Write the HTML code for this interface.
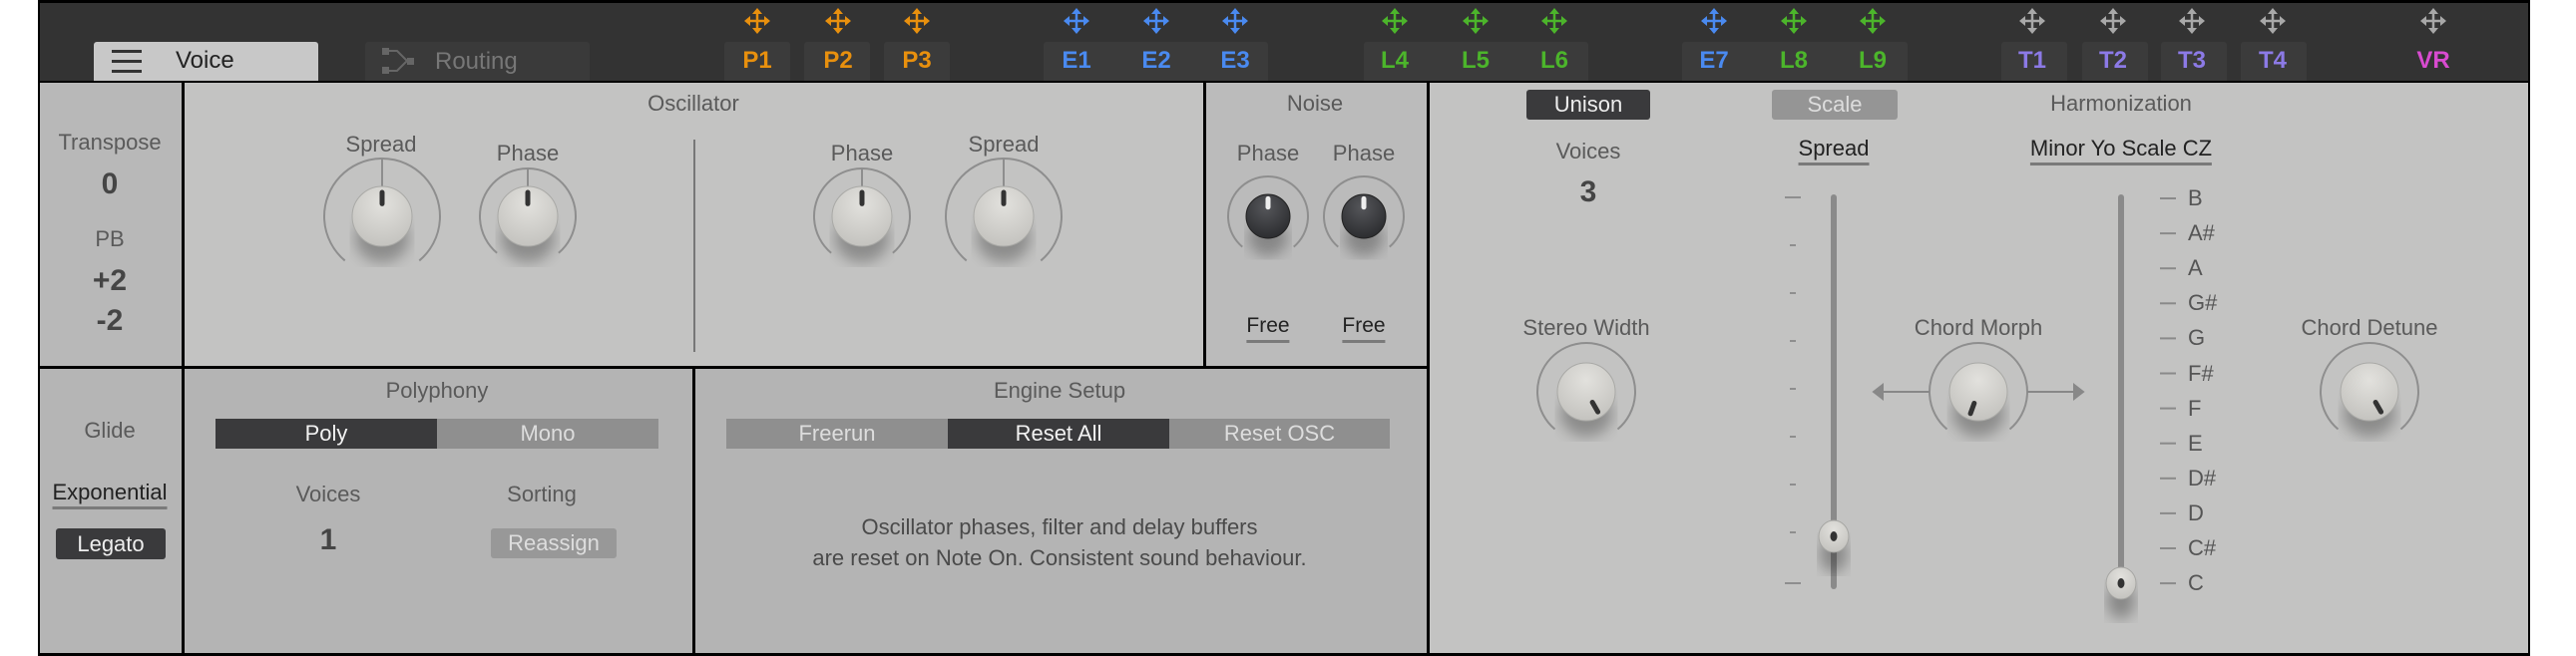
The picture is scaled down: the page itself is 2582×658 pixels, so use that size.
<!DOCTYPE html>
<html><head><meta charset="utf-8">
<style>
*{margin:0;padding:0;box-sizing:border-box}
body{width:2582px;height:658px;background:#fff;position:relative;overflow:hidden;font-family:"Liberation Sans",sans-serif}
.a{position:absolute}
.t{position:absolute;transform:translateX(-50%);white-space:nowrap;color:#5a5a5a;font-size:22px;line-height:26px}
.b{font-weight:bold;color:#454545;font-size:30px;line-height:34px}
.tl{position:absolute;font-size:24px;font-weight:bold;transform:translateX(-50%);top:46px;line-height:30px}
.box{position:absolute;top:42px;height:39px;background:#3b3b3b;border-radius:3px 3px 0 0}
.ul{border-bottom:3px solid #7a7a7a;color:#222;padding-bottom:1px}
.seg{position:absolute;height:30px;font-size:22px;line-height:30px;text-align:center;color:#ddd;background:#8f8f8f}
.dk{background:#3a3a3c;color:#f2f2f2}
</style></head><body>
<!-- panel frame -->
<div class="a" style="left:38px;top:0;width:2498px;height:658px;background:#000"></div>
<div class="a" style="left:40px;top:3px;width:2494px;height:78px;background:#333"></div>
<!-- row1 -->
<div class="a" style="left:40px;top:83px;width:142px;height:284px;background:#b8b8b8"></div>
<div class="a" style="left:185px;top:83px;width:1021px;height:284px;background:#c3c3c2"></div>
<div class="a" style="left:1209px;top:83px;width:221px;height:284px;background:#bbbbbb"></div>
<div class="a" style="left:1433px;top:83px;width:1101px;height:572px;background:#c3c3c2"></div>
<!-- row2 -->
<div class="a" style="left:40px;top:370px;width:142px;height:285px;background:#b5b5b5"></div>
<div class="a" style="left:185px;top:370px;width:509px;height:285px;background:#b4b4b4"></div>
<div class="a" style="left:697px;top:370px;width:733px;height:285px;background:#b4b4b4"></div>
<div class="a" style="left:695px;top:140px;width:2px;height:213px;background:#777"></div>

<!-- top bar -->
<div class="a" style="left:94px;top:42px;width:225px;height:39px;background:#c8c8c8;border-radius:3px 3px 0 0"></div>
<div class="a" style="left:112px;top:50px;width:30px;height:3px;background:#333;box-shadow:0 10px 0 #333,0 20px 0 #333"></div>
<div class="a" style="left:176px;top:46px;font-size:24px;line-height:30px;color:#222">Voice</div>
<div class="a" style="left:366px;top:42px;width:225px;height:39px;background:#3a3a3a;border-radius:3px 3px 0 0"></div>
<svg class="a" style="left:382px;top:47px" width="36" height="30"><rect x="1" y="1" width="7" height="7" fill="#666"/><rect x="1" y="20" width="7" height="7" fill="#666"/><rect x="26" y="11" width="7" height="7" fill="#666"/><path d="M8 4 L16 4 L26 14 M8 24 L16 24 L26 14" stroke="#666" stroke-width="2" fill="none"/></svg>
<div class="a" style="left:436px;top:47px;font-size:24px;line-height:30px;color:#777">Routing</div>
<div class="box" style="left:726px;width:66px"></div><div class="box" style="left:806px;width:66px"></div><div class="box" style="left:886px;width:66px"></div>
<div class="box" style="left:1046px;width:225px"></div>
<div class="box" style="left:1367px;width:225px"></div>
<div class="box" style="left:1686px;width:226px"></div>
<div class="box" style="left:2006px;width:66px"></div><div class="box" style="left:2087px;width:66px"></div><div class="box" style="left:2166px;width:66px"></div><div class="box" style="left:2246px;width:66px"></div>
<div id="tb"></div>

<!-- row1 text -->
<div class="t" style="left:110px;top:130px">Transpose</div>
<div class="t b" style="left:110px;top:168px">0</div>
<div class="t" style="left:110px;top:227px">PB</div>
<div class="t b" style="left:110px;top:265px">+2</div>
<div class="t b" style="left:110px;top:305px">-2</div>
<div class="t" style="left:695px;top:91px">Oscillator</div>
<div class="t" style="left:382px;top:132px">Spread</div>
<div class="t" style="left:529px;top:141px">Phase</div>
<div class="t" style="left:864px;top:141px">Phase</div>
<div class="t" style="left:1006px;top:132px">Spread</div>
<div class="t" style="left:1318px;top:91px">Noise</div>
<div class="t" style="left:1271px;top:141px">Phase</div>
<div class="t" style="left:1367px;top:141px">Phase</div>
<div class="t ul" style="left:1271px;top:314px;font-size:21px">Free</div>
<div class="t ul" style="left:1367px;top:314px;font-size:21px">Free</div>

<!-- right panel -->
<div class="a" style="left:1530px;top:90px;width:124px;height:30px;background:#3a3a3c;border-radius:3px;color:#eee;font-size:22px;line-height:30px;text-align:center">Unison</div>
<div class="a" style="left:1776px;top:90px;width:126px;height:30px;background:#959595;border-radius:3px;color:#ddd;font-size:22px;line-height:30px;text-align:center">Scale</div>
<div class="t" style="left:2126px;top:91px">Harmonization</div>
<div class="t" style="left:1592px;top:139px">Voices</div>
<div class="t b" style="left:1592px;top:176px">3</div>
<div class="t ul" style="left:1838px;top:136px">Spread</div>
<div class="t ul" style="left:2126px;top:136px">Minor Yo Scale CZ</div>
<div class="t" style="left:1590px;top:316px">Stereo Width</div>
<div class="t" style="left:1983px;top:316px">Chord Morph</div>
<div class="t" style="left:2375px;top:316px">Chord Detune</div>
<div id="notes"></div>

<!-- row2 -->
<div class="t" style="left:110px;top:419px">Glide</div>
<div class="t ul" style="left:110px;top:481px">Exponential</div>
<div class="a" style="left:56px;top:530px;width:110px;height:31px;background:#3a3a3c;border-radius:3px;color:#eee;font-size:22px;line-height:31px;text-align:center">Legato</div>
<div class="t" style="left:438px;top:379px">Polyphony</div>
<div class="seg dk" style="left:216px;top:420px;width:222px">Poly</div>
<div class="seg" style="left:438px;top:420px;width:222px">Mono</div>
<div class="t" style="left:329px;top:483px">Voices</div>
<div class="t b" style="left:329px;top:525px">1</div>
<div class="t" style="left:543px;top:483px">Sorting</div>
<div class="a" style="left:492px;top:530px;width:126px;height:30px;background:#989898;border-radius:3px;color:#ddd;font-size:22px;line-height:30px;text-align:center">Reassign</div>
<div class="t" style="left:1062px;top:379px">Engine Setup</div>
<div class="seg" style="left:728px;top:420px;width:222px">Freerun</div>
<div class="seg dk" style="left:950px;top:420px;width:222px">Reset All</div>
<div class="seg" style="left:1172px;top:420px;width:221px">Reset OSC</div>
<div class="t" style="left:1062px;top:516px;color:#4a4a4a">Oscillator phases, filter and delay buffers</div>
<div class="t" style="left:1062px;top:547px;color:#4a4a4a">are reset on Note On. Consistent sound behaviour.</div>

<svg id="g" class="a" style="left:0;top:0" width="2582" height="658"></svg>

<script>
var tb='',cols={o:'#e8900e',b:'#4a8af0',g:'#4cb52b',p:'#8c7ae6',v:'#d84bd0',gr:'#a8a8a8'};
var items=[['P1',759,'o','o'],['P2',840,'o','o'],['P3',919,'o','o'],['E1',1079,'b','b'],['E2',1159,'b','b'],['E3',1238,'b','b'],['L4',1398,'g','g'],['L5',1479,'g','g'],['L6',1558,'g','g'],['E7',1718,'b','b'],['L8',1798,'g','g'],['L9',1877,'g','g'],['T1',2037,'p','gr'],['T2',2118,'p','gr'],['T3',2197,'p','gr'],['T4',2278,'p','gr'],['VR',2439,'v','gr']];
var svg='';
items.forEach(function(it){
 tb+='<div class="tl" style="left:'+it[1]+'px;color:'+cols[it[2]]+'">'+it[0]+'</div>';
 var x=it[1],y=21,c=cols[it[3]];
 svg+='<g stroke="'+c+'" stroke-width="2.5" fill="'+c+'"><line x1="'+x+'" y1="'+(y-10)+'" x2="'+x+'" y2="'+(y+10)+'"/><line x1="'+(x-10)+'" y1="'+y+'" x2="'+(x+10)+'" y2="'+y+'"/></g>'+
 '<g fill="'+c+'"><path d="M'+x+' '+(y-13)+'l-5 6h10z M'+x+' '+(y+13)+'l-5 -6h10z M'+(x-13)+' '+y+'l6 -5v10z M'+(x+13)+' '+y+'l-6 -5v10z"/></g>';
});
document.getElementById('tb').innerHTML=tb;
var n=['B','A#','A','G#','G','F#','F','E','D#','D','C#','C'],nh='';
n.forEach(function(s,i){nh+='<div class="a" style="left:2193px;top:'+(186+i*35.1)+'px;font-size:22px;line-height:26px;color:#555">'+s+'</div>';
 svg+='<line x1="2165" y1="'+(199+i*35.1)+'" x2="2181" y2="'+(199+i*35.1)+'" stroke="#8a8a8a" stroke-width="2"/>';});
document.getElementById('notes').innerHTML=nh;
svg+='<defs><radialGradient id="kg" cx="50%" cy="30%" r="70%"><stop offset="0" stop-color="#e2e1dd"/><stop offset="1" stop-color="#c4c3bf"/></radialGradient><radialGradient id="dg" cx="45%" cy="30%" r="70%"><stop offset="0" stop-color="#55565a"/><stop offset="1" stop-color="#2c2d30"/></radialGradient><filter id="bl"><feGaussianBlur stdDeviation="7"/></filter></defs>';
function pt(cx,cy,r,a){a=a*Math.PI/180;return [cx+r*Math.sin(a),cy-r*Math.cos(a)];}
function knob(cx,cy,R,r,ang,dark,line){
 var s=pt(cx,cy,R,-140),e=pt(cx,cy,R,140);
 svg+='<ellipse cx="'+cx+'" cy="'+(cy+22)+'" rx="'+(r*0.9)+'" ry="'+(r*0.8)+'" fill="#000" opacity="0.28" filter="url(#bl)"/>';
 svg+='<path d="M'+s[0]+' '+s[1]+' A'+R+' '+R+' 0 1 1 '+e[0]+' '+e[1]+'" stroke="#8e8e8e" stroke-width="2" fill="none"/>';
 if(line)svg+='<line x1="'+cx+'" y1="'+(cy-R)+'" x2="'+cx+'" y2="'+(cy-r)+'" stroke="#8e8e8e" stroke-width="2"/>';
 svg+='<circle cx="'+cx+'" cy="'+cy+'" r="'+r+'" fill="url(#'+(dark?'dg':'kg')+')" stroke="'+(dark?'#222':'#a9a9a6')+'" stroke-width="1"/>';
 var p1=pt(cx,cy,r*0.42,ang),p2=pt(cx,cy,r*0.8,ang);
 svg+='<line x1="'+p1[0]+'" y1="'+p1[1]+'" x2="'+p2[0]+'" y2="'+p2[1]+'" stroke="'+(dark?'#eee':'#333')+'" stroke-width="5" stroke-linecap="round"/>';
}
knob(383,217,58,30,0,0,1);knob(529,217,48,30,0,0,1);knob(864,217,48,30,0,0,1);knob(1006,217,58,30,0,0,1);
knob(1271,217,40,22,0,1,0);knob(1367,217,40,22,0,1,0);
knob(1590,393,49,29,150,0,0);knob(1983,393,49,29,-160,0,0);knob(2375,393,49,29,150,0,0);
// arrows chord morph
svg+='<g stroke="#888" stroke-width="2" fill="#888"><line x1="1884" y1="393" x2="1934" y2="393"/><line x1="2032" y1="393" x2="2082" y2="393"/><path d="M1878 393l9 -7v14z M2088 393l-9 -7v14z"/></g>';
// sliders
[[1838,198,588,538],[2126,198,585,585]].forEach(function(s){
 svg+='<line x1="'+s[0]+'" y1="'+s[1]+'" x2="'+s[0]+'" y2="'+s[2]+'" stroke="#8a8a8a" stroke-width="6" stroke-linecap="round"/>';
 svg+='<ellipse cx="'+s[0]+'" cy="'+(s[3]+18)+'" rx="14" ry="18" fill="#000" opacity="0.3" filter="url(#bl)"/>';
 svg+='<ellipse cx="'+s[0]+'" cy="'+s[3]+'" rx="15" ry="16" fill="url(#kg)" stroke="#a5a5a2"/><ellipse cx="'+s[0]+'" cy="'+s[3]+'" rx="3.5" ry="5" fill="#333"/>';
});
[[198,16],[246,6],[294,6],[342,6],[390,6],[438,6],[486,6],[534,6],[585,16]].forEach(function(t){
 svg+='<line x1="'+(1797-t[1]/2)+'" y1="'+t[0]+'" x2="'+(1797+t[1]/2)+'" y2="'+t[0]+'" stroke="#8e8e8e" stroke-width="2"/>';});
document.getElementById('g').innerHTML=svg;
</script>
</body></html>
